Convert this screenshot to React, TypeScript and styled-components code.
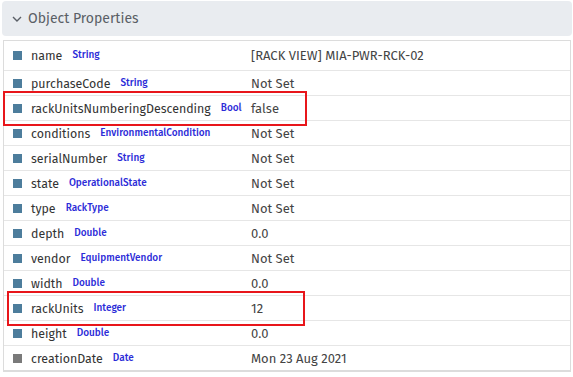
import * as React from 'react'
import styled, { createGlobalStyle } from 'styled-components'

interface Prop {
  name: string
  type: string
  value: string
  kind?: 'attr' | 'meta'
  tall?: boolean
  mark?: { left: number; width: number }
}

const props: Prop[] = [
  { name: 'name', type: 'String', value: '[RACK VIEW] MIA-PWR-RCK-02', tall: true },
  { name: 'purchaseCode', type: 'String', value: 'Not Set' },
  {
    name: 'rackUnitsNumberingDescending',
    type: 'Boolean',
    value: 'false',
    mark: { left: -1, width: 300 },
  },
  { name: 'conditions', type: 'EnvironmentalCondition', value: 'Not Set' },
  { name: 'serialNumber', type: 'String', value: 'Not Set' },
  { name: 'state', type: 'OperationalState', value: 'Not Set' },
  { name: 'type', type: 'RackType', value: 'Not Set' },
  { name: 'depth', type: 'Double', value: '0.0' },
  { name: 'vendor', type: 'EquipmentVendor', value: 'Not Set' },
  { name: 'width', type: 'Double', value: '0.0' },
  { name: 'rackUnits', type: 'Integer', value: '12', mark: { left: 3, width: 294 } },
  { name: 'height', type: 'Double', value: '0.0' },
  { name: 'creationDate', type: 'Date', value: 'Mon 23 Aug 2021', kind: 'meta' },
]

const GlobalStyle = createGlobalStyle`
  body {
    margin: 0;
    background: #fff;
    font-family: "Fira Sans", "Noto Sans", "Open Sans", sans-serif;
  }
`

const Page = styled.div`
  width: 573px;
  padding: 1px 1px 0 2px;
  box-sizing: border-box;
`

const Header = styled.div`
  height: 35px;
  background: #e9ecf0;
  border-radius: 4px;
  display: flex;
  align-items: center;
  gap: 6px;
  padding-left: 10px;
  color: #5a5f66;
  font-size: 14px;
`

const Table = styled.div`
  margin: 4px 1px 0 1px;
  border: 1px solid #dcdcdc;
  border-bottom-width: 2px;
`

const Row = styled.div<{ $tall?: boolean }>`
  position: relative;
  display: grid;
  grid-template-columns: 238px minmax(0, 1fr);
  column-gap: 9px;
  align-items: center;
  height: ${(p) => (p.$tall ? 30 : 25)}px;
  border-bottom: 1px solid #e6e6e6;
  box-sizing: border-box;
  &:last-child {
    border-bottom: none;
    height: 24px;
  }
`

const NameCell = styled.div`
  display: flex;
  align-items: center;
  min-width: 0;
  padding-left: 9px;
  overflow: hidden;
  white-space: nowrap;
`

const Square = styled.span<{ $kind: 'attr' | 'meta' }>`
  width: 9px;
  height: 9px;
  flex: none;
  margin-right: 9px;
  background: ${(p) => (p.$kind === 'meta' ? '#7a7a7a' : '#4d7d9c')};
`

const Name = styled.span`
  font-size: 12.4px;
  color: #333;
  margin-right: 10px;
`

const TypeTag = styled.span`
  font-size: 10px;
  font-weight: 500;
  color: #2b2bd8;
  margin-top: -1px;
`

const Value = styled.div`
  font-size: 13px;
  color: #444;
  white-space: nowrap;
`

const Mark = styled.div`
  position: absolute;
  top: -5px;
  bottom: -6px;
  border: 2px solid #e8161b;
  pointer-events: none;
`

const Chevron = () => (
  <svg width="10" height="6" viewBox="0 0 10 6">
    <path d="M1 1l4 4 4-4" fill="none" stroke="#5a5f66" strokeWidth="1.4" />
  </svg>
)

export default function App() {
  return (
    <Page>
      <GlobalStyle />
      <Header>
        <Chevron />
        Object Properties
      </Header>
      <Table>
        {props.map((p) => (
          <Row key={p.name} $tall={p.tall}>
            <NameCell>
              <Square $kind={p.kind || 'attr'} />
              <Name>{p.name}</Name>
              <TypeTag>{p.type}</TypeTag>
            </NameCell>
            <Value>{p.value}</Value>
            {p.mark ? (
              <Mark style={{ left: p.mark.left, width: p.mark.width }} />
            ) : null}
          </Row>
        ))}
      </Table>
    </Page>
  )
}
